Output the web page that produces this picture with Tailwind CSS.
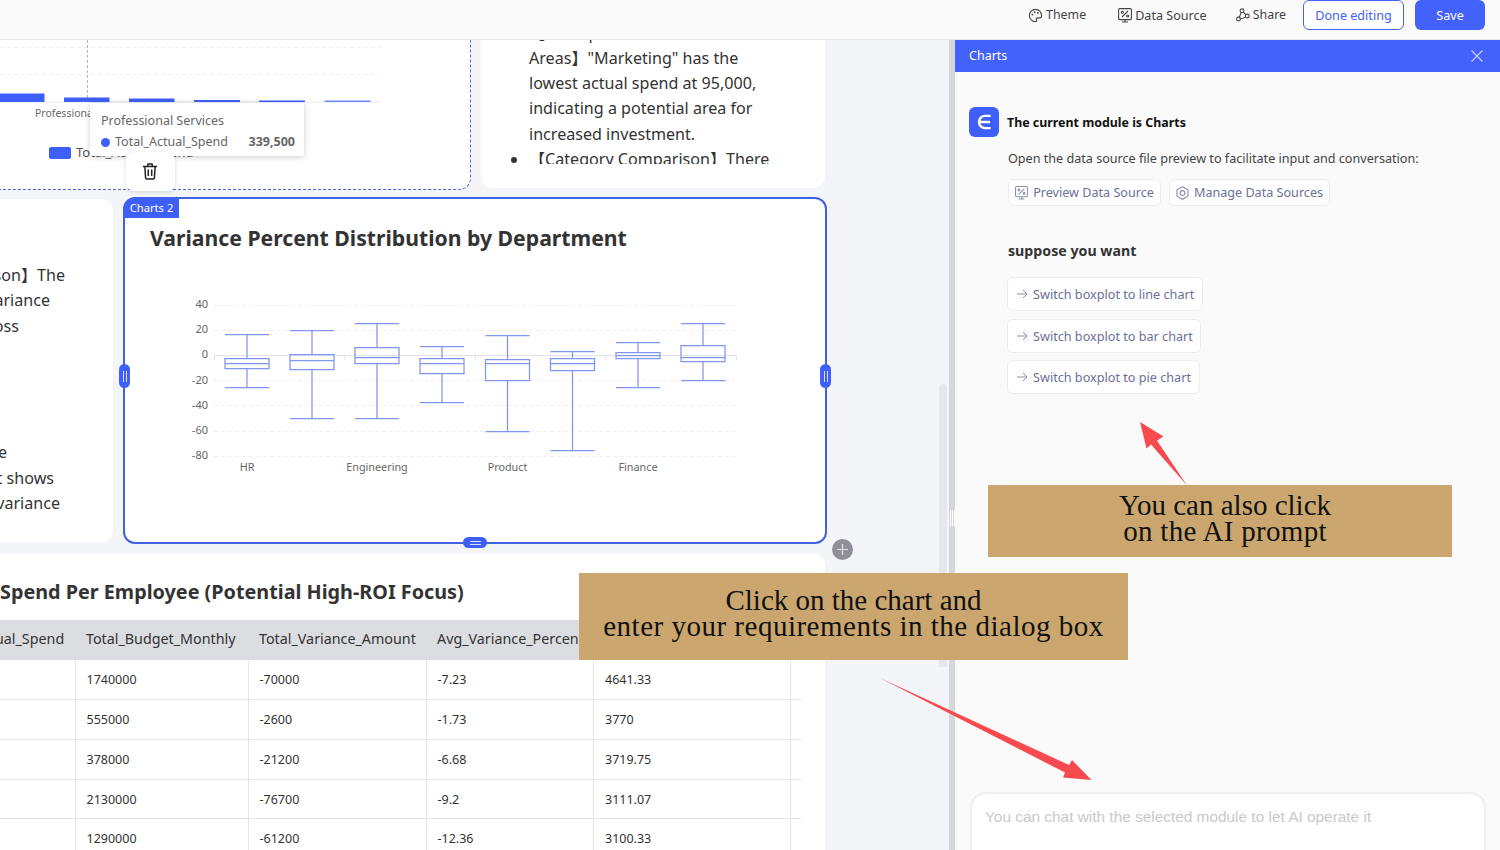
<!DOCTYPE html>
<html lang="en">
<head>
    <meta charset="UTF-8">
    <meta name="viewport" content="width=device-width, initial-scale=1.0">
    <title>Charts editor</title>
    <script src="https://cdn.jsdelivr.net/npm/@tailwindcss/browser@4"></script>
</head>
<body class="h-[850px] w-[1500px] overflow-hidden relative bg-[#f3f5f9] text-[#333] [font-family:'Noto_Sans','Noto_Sans_CJK_SC',sans-serif]">

    <!-- top bar -->
    <header class="h-10 bg-[#fafafa] border-b border-[#e8e8ea] flex justify-end items-start pr-[15px] text-[12.4px] text-[#444]">
        <div class="h-[30px] flex items-center gap-[3px] mr-[32px]">
            <svg class="w-[15px] h-[15px]" viewBox="0 0 16 16" fill="none" stroke="#444" stroke-width="1.2"><path d="M8 1.5a6.5 6.5 0 1 0 0 13c1.6 0 1.6-1.2 1.1-2-.6-1 0-2 1.1-2h2.2c1.2 0 2.1-.9 2.1-2.2C14.500 4.300 11.600 1.500 8 1.500z"/><circle cx="4.700" cy="7" r="1" fill="#444" stroke="none"/><circle cx="7" cy="4.500" r="1" fill="#444" stroke="none"/><circle cx="10.500" cy="5.200" r="1" fill="#444" stroke="none"/></svg>
            <span>Theme</span>
        </div>
        <div class="h-[30px] flex items-center gap-[3px] mr-[29px] pt-[2px] text-[12.6px]">
            <svg class="w-[14px] h-[15px] -mt-[2px]" viewBox="0 0 14 15" fill="none" stroke="#444" stroke-width="1.100"><rect x="0.600" y="0.600" width="12.800" height="11" rx="1.200"/><path d="M4 14h6M7 11.600V14M4 9l6-6"/><circle cx="4.300" cy="4.300" r="1"/><circle cx="9.700" cy="8" r="1"/></svg>
            <span>Data Source</span>
        </div>
        <div class="h-[30px] flex items-center gap-[3px] mr-[17px]">
            <svg class="w-[14px] h-[14px]" viewBox="0 0 14 14" fill="none" stroke="#444" stroke-width="1.100"><circle cx="6" cy="2.800" r="1.900"/><circle cx="2.500" cy="11" r="1.900"/><circle cx="11.300" cy="8" r="1.900"/><path d="M5.200 4.600 3.300 9.200M7.500 4.200l2.300 2.700M4.300 10.800c2 0 3.500-.6 5.200-2"/></svg>
            <span>Share</span>
        </div>
        <button class="h-[30px] w-[101px] pt-[2px] border border-[#4361fb] rounded-md bg-white text-[#4361fb] text-[12.6px] mr-[11px]">Done editing</button>
        <button class="h-[30px] w-[70px] pt-[2px] rounded-md bg-[#4361fb] text-white text-[12.6px]">Save</button>
    </header>

    <div class="flex h-[810px]">
        <!-- canvas -->
        <main class="w-[949px] flex flex-col shrink-0">
            <!-- row 1 -->
            <section class="flex gap-[10px] h-[150px] relative z-10">
                <div class="w-[471px] relative bg-white border-r border-b border-dashed border-[#4a63d8] rounded-br-xl">
                    <svg class="w-[470px] h-[149px]" viewBox="0 40 470 149">
                        <g stroke="#eeeeee" stroke-dasharray="4 3">
                            <path d="M0 47.500H380M0 74.500H380"/>
                        </g>
                        <path d="M87.500 40V102" stroke="#b5b5b5" stroke-dasharray="3 2"/>
                        <path d="M0 102H380" stroke="#e6e8ee"/>
                        <g fill="#3f5ffb">
                            <rect x="0" y="93.500" width="44.500" height="8.500"/>
                            <rect x="64" y="97.500" width="45.500" height="4.500"/>
                            <rect x="129" y="98.500" width="45.500" height="3.500"/>
                            <rect x="194" y="100" width="46" height="2"/>
                            <rect x="259" y="100.500" width="46" height="1.500"/>
                            <rect x="324.500" y="100.500" width="46" height="1.500" fill="#6f87fb"/>
                        </g>
                        <text x="35" y="117" font-size="10.5" fill="#666">Professional Services</text>
                        <rect x="49" y="147" width="22" height="12" rx="2" fill="#3f5ffb"/>
                        <text x="76" y="157" font-size="13" fill="#555">Total_Actual_Spend</text>
                    </svg>
                    <!-- hover tooltip -->
                    <div class="absolute left-[90px] top-[63px] w-[214px] h-[53px] bg-white shadow-[0_1px_6px_rgba(0,0,0,0.2)] pl-[11px] pr-[9px] pt-[9px] text-[12.5px] text-[#666]">
                        <div class="leading-[18px]">Professional Services</div>
                        <div class="flex items-center mt-[3px] leading-[18px]">
                            <span class="w-[9px] h-[9px] rounded-full bg-[#3f5ffb] mr-[5px]"></span>
                            <span>Total_Actual_Spend</span>
                            <span class="ml-auto font-bold">339,500</span>
                        </div>
                    </div>
                    <!-- delete -->
                    <button class="absolute left-[126px] top-[112px] w-[49px] h-[39px] bg-white rounded-lg shadow-[0_1px_4px_rgba(0,0,0,0.15)] flex items-center justify-center pr-[2px]">
                        <svg class="w-[16px] h-[17px]" viewBox="0 0 16 17" fill="none" stroke="#222" stroke-width="1.500"><path d="M1 3.500h14M5.500 3.500 6 1h4l.5 2.500M2.800 3.500l.8 11.300c0 .7.500 1.200 1.200 1.200h6.400c.7 0 1.200-.5 1.200-1.200l.8-11.300M6.300 6.500v6.500M9.700 6.500v6.500"/></svg>
                    </button>
                </div>
                <div class="w-[344px] h-[148px] bg-white rounded-b-xl">
                    <div class="h-[124px] overflow-hidden text-[16.1px] leading-[25.3px]">
                        <ul class="list-disc pl-[48px] -mt-[19.5px]">
                            <li>【Low Spend<br>Areas】"Marketing" has the<br>lowest actual spend at 95,000,<br>indicating a potential area for<br>increased investment.</li>
                            <li>【Category Comparison】There</li>
                        </ul>
                    </div>
                </div>
            </section>

            <!-- row 2 -->
            <section class="flex gap-[10px] h-[347px] mt-[7px]">
                <div class="w-[113px] h-[343px] mt-[2px] bg-white rounded-r-xl overflow-hidden pt-[64px] text-[16.1px] leading-[25.3px]">
                    <div class="-ml-[100px] text-right whitespace-nowrap">
                        <div class="w-[165px]">son】The</div>
                        <div class="w-[150px]">variance</div>
                        <div class="w-[119px]">across</div>
                        <div class="w-[107px] mt-[101.500px]">the</div>
                        <div class="w-[154px]">chart shows</div>
                        <div class="w-[160px]">variance</div>
                    </div>
                </div>
                <div class="w-[704px] relative bg-white border-2 border-[#4162e0] rounded-xl">
                    <span class="absolute -left-px -top-px w-[55px] h-[20px] bg-[#3f5ffb] text-white text-[11.2px] leading-[20px] text-center rounded-tl-xl">Charts 2</span>
                    <h2 class="pl-[25px] pt-[24px] text-[21.2px] leading-[30px] font-bold whitespace-nowrap">Variance Percent Distribution by Department</h2>
                    <svg class="w-[560px] h-[190px] ml-[60px] mt-[37px]" viewBox="185 290 560 190">
                        <g stroke="#eeeeee" stroke-dasharray="4 3">
                            <path d="M214 305.500H737M214 330.500H737M214 380.500H737M214 405.500H737M214 431.500H737M214 456.500H737"/>
                        </g>
                        <path d="M214 355.500H737M214.500 355V360M345 355V360M475.500 355V360M606 355V360M736.500 355V360" stroke="#e0e3ea"/>
                        <g font-size="11" fill="#666" text-anchor="end">
                            <text x="208" y="308">40</text>
                            <text x="208" y="333">20</text>
                            <text x="208" y="358">0</text>
                            <text x="208" y="384">-20</text>
                            <text x="208" y="409">-40</text>
                            <text x="208" y="434">-60</text>
                            <text x="208" y="459">-80</text>
                        </g>
                        <g font-size="10.8" fill="#666" text-anchor="middle">
                            <text x="247" y="471">HR</text>
                            <text x="377" y="471">Engineering</text>
                            <text x="507.500" y="471">Product</text>
                            <text x="638" y="471">Finance</text>
                        </g>
                        <g fill="none" stroke="#8196f0" stroke-width="1.250">
                            <path d="M225 334.500H269M247 334.500V358.500M225 358.500H269V368.500H225ZM225 363.500H269M247 368.500V387.500M225 387.500H269"/>
                            <path d="M290 330.500H334M312 330.500V354.500M290 354.500H334V369.500H290ZM290 360.500H334M312 369.500V418.500M290 418.500H334"/>
                            <path d="M355 323.500H399M377 323.500V347.500M355 347.500H399V363.500H355ZM355 357.500H399M377 363.500V418.500M355 418.500H399"/>
                            <path d="M420 346.500H464M442 346.500V358.500M420 358.500H464V373.500H420ZM420 363.500H464M442 373.500V402.500M420 402.500H464"/>
                            <path d="M485.500 335.500H529.500M507.500 335.500V359.500M485.500 359.500H529.500V380.500H485.500ZM485.500 363.500H529.500M507.500 380.500V431.500M485.500 431.500H529.500"/>
                            <path d="M550.500 351.500H594.500M572.500 351.500V358.500M550.500 358.500H594.500V370.500H550.500ZM550.500 363.500H594.500M572.500 370.500V450.500M550.500 450.500H594.500"/>
                            <path d="M616 342.500H660M638 342.500V352.500M616 352.500H660V358.500H616ZM616 355.500H660M638 358.500V387.500M616 387.500H660"/>
                            <path d="M681 323.500H725M703 323.500V345.500M681 345.500H725V361.500H681ZM681 357.500H725M703 361.500V380.500M681 380.500H725"/>
                        </g>
                    </svg>
                    <!-- resize handles -->
                    <span class="absolute -left-[6px] top-[165px] w-[11px] h-[24px] rounded-full bg-[#3f5ffb] flex items-center justify-center gap-[2px]"><i class="w-px h-[11px] bg-white/80"></i><i class="w-px h-[11px] bg-white/80"></i></span>
                    <span class="absolute -right-[6px] top-[165px] w-[11px] h-[24px] rounded-full bg-[#3f5ffb] flex items-center justify-center gap-[2px]"><i class="w-px h-[11px] bg-white/80"></i><i class="w-px h-[11px] bg-white/80"></i></span>
                    <span class="absolute left-[338px] -bottom-[6px] w-[24px] h-[11px] rounded-full bg-[#3f5ffb] flex flex-col items-center justify-center gap-[2px]"><i class="w-[11px] h-px bg-white/80"></i><i class="w-[11px] h-px bg-white/80"></i></span>
                    <span class="absolute -right-[28px] bottom-[-18px] w-[21px] h-[21px] rounded-full bg-[#8e9099] flex items-center justify-center">
                        <svg class="w-[11px] h-[11px]" viewBox="0 0 11 11" stroke="#e4e4e8" stroke-width="1.200"><path d="M5.500 0V11M0 5.500H11"/></svg>
                    </span>
                </div>
            </section>

            <!-- row 3 -->
            <section class="w-[825px] flex-1 mt-[10px] bg-white rounded-tr-xl overflow-hidden">
                <h2 class="pt-[24px] text-[19.8px] leading-[28px] font-bold whitespace-nowrap">Spend Per Employee (Potential High-ROI Focus)</h2>
                <div class="w-[801px] mt-[14px] overflow-hidden">
                    <table class="table-fixed -ml-[80px] w-[920.500px] text-[12.5px] border-collapse">
                        <colgroup>
                            <col class="w-[155px]"><col class="w-[173px]"><col class="w-[178px]"><col class="w-[167.500px]"><col class="w-[197px]"><col class="w-[50px]">
                        </colgroup>
                        <thead class="bg-[#dcdde1] text-[14.3px] text-left">
                            <tr class="h-[40px]">
                                <th class="font-normal pl-[15px] pb-[2px] whitespace-nowrap">Total_Actual_Spend</th>
                                <th class="font-normal pl-[11px] pb-[2px] whitespace-nowrap">Total_Budget_Monthly</th>
                                <th class="font-normal pl-[11px] pb-[2px] whitespace-nowrap">Total_Variance_Amount</th>
                                <th class="font-normal pl-[11px] pb-[2px] whitespace-nowrap">Avg_Variance_Percent</th>
                                <th class="font-normal pl-[11px] pb-[2px] whitespace-nowrap">Spend_Per_Employee</th>
                                <th></th>
                            </tr>
                        </thead>
                        <tbody class="[&_td]:pt-[2px]">
                            <tr class="h-[39.500px] border-b border-[#e6e6e9]">
                                <td></td><td class="border-l border-[#e6e6e9] pl-[11px]">1740000</td><td class="border-l border-[#e6e6e9] pl-[11px]">-70000</td><td class="border-l border-[#e6e6e9] pl-[11px]">-7.23</td><td class="border-l border-[#e6e6e9] pl-[11px]">4641.33</td><td class="border-l border-[#e6e6e9]"></td>
                            </tr>
                            <tr class="h-[40px] border-b border-[#e6e6e9]">
                                <td></td><td class="border-l border-[#e6e6e9] pl-[11px]">555000</td><td class="border-l border-[#e6e6e9] pl-[11px]">-2600</td><td class="border-l border-[#e6e6e9] pl-[11px]">-1.73</td><td class="border-l border-[#e6e6e9] pl-[11px]">3770</td><td class="border-l border-[#e6e6e9]"></td>
                            </tr>
                            <tr class="h-[40px] border-b border-[#e6e6e9]">
                                <td></td><td class="border-l border-[#e6e6e9] pl-[11px]">378000</td><td class="border-l border-[#e6e6e9] pl-[11px]">-21200</td><td class="border-l border-[#e6e6e9] pl-[11px]">-6.68</td><td class="border-l border-[#e6e6e9] pl-[11px]">3719.75</td><td class="border-l border-[#e6e6e9]"></td>
                            </tr>
                            <tr class="h-[39px] border-b border-[#e6e6e9]">
                                <td></td><td class="border-l border-[#e6e6e9] pl-[11px]">2130000</td><td class="border-l border-[#e6e6e9] pl-[11px]">-76700</td><td class="border-l border-[#e6e6e9] pl-[11px]">-9.2</td><td class="border-l border-[#e6e6e9] pl-[11px]">3111.07</td><td class="border-l border-[#e6e6e9]"></td>
                            </tr>
                            <tr class="h-[40px]">
                                <td></td><td class="border-l border-[#e6e6e9] pl-[11px]">1290000</td><td class="border-l border-[#e6e6e9] pl-[11px]">-61200</td><td class="border-l border-[#e6e6e9] pl-[11px]">-12.36</td><td class="border-l border-[#e6e6e9] pl-[11px]">3100.33</td><td class="border-l border-[#e6e6e9]"></td>
                            </tr>
                        </tbody>
                    </table>
                </div>
            </section>
        </main>

        <!-- divider -->
        <div class="w-[6px] shrink-0 bg-[#d5d7db] flex flex-col">
            <div class="h-[470px]"></div>
            <div class="h-[16px] flex justify-center gap-px"><i class="w-px bg-white"></i><i class="w-px bg-white"></i><i class="w-px bg-white"></i></div>
        </div>

        <!-- charts panel -->
        <aside class="flex-1 bg-[#fafafa] flex flex-col">
            <div class="h-8 bg-[#4361fb] flex items-center justify-between pl-[14px] pr-[17px] text-white text-[12.5px]">
                <span>Charts</span>
                <svg class="w-[12px] h-[12px]" viewBox="0 0 12 12" stroke="#c9d2fd" stroke-width="1.100"><path d="M0.500 0.500 11.500 11.500M11.500 0.500 0.500 11.500"/></svg>
            </div>
            <div class="pl-[14px] pt-[35px] flex items-center h-[65px]">
                <span class="w-[30px] h-[30px] rounded-md bg-[#3f5ffb] flex items-center justify-center">
                    <svg class="w-[20px] h-[20px]" viewBox="0 0 18 18" fill="none" stroke="#fff" stroke-width="2.200"><path d="M15 3.500H10a5.500 5.500 0 0 0 0 11h5M5 9h9.500"/></svg>
                </span>
                <span class="ml-[8px] pt-[2px] text-[12.4px] font-bold text-[#111]">The current module is Charts</span>
            </div>
            <div class="pl-[53px]">
                <p class="mt-[13px] text-[12.6px] leading-[18px] text-[#444] whitespace-nowrap">Open the data source file preview to facilitate input and conversation:</p>
                <div class="flex gap-[8px] mt-[11px]">
                    <button class="h-[27px] w-[153px] pt-px bg-white border border-[#ececf0] rounded-md flex items-center justify-center gap-[5px] text-[12.6px] text-[#6b7097]">
                        <svg class="w-[13px] h-[14px]" viewBox="0 0 14 15" fill="none" stroke="#8a8ea8" stroke-width="1.100"><rect x="0.600" y="0.600" width="12.800" height="11" rx="1.200"/><path d="M4 14h6M7 11.600V14M4 9l6-6"/><circle cx="4.300" cy="4.300" r="1"/><circle cx="9.700" cy="8" r="1"/></svg>
                        Preview Data Source
                    </button>
                    <button class="h-[27px] w-[161px] pt-px bg-white border border-[#ececf0] rounded-md flex items-center justify-center gap-[5px] text-[12.6px] text-[#6b7097]">
                        <svg class="w-[13px] h-[14px]" viewBox="0 0 13 14" fill="none" stroke="#8a8ea8" stroke-width="1.100"><path d="M6.500 .7 12 3.800v6.400L6.500 13.300 1 10.200V3.800z"/><circle cx="6.500" cy="7" r="2.400"/></svg>
                        Manage Data Sources
                    </button>
                </div>
                <h3 class="mt-[35px] text-[14.2px] leading-[20px] font-bold text-[#333]">suppose you want</h3>
                <div class="flex flex-col items-start gap-[7.500px] mt-[16px] -ml-px text-[12.65px] text-[#6b7097]">
                    <button class="h-[34px] w-[196px] bg-white border border-[#ececf0] rounded-md flex items-center pl-[9px] gap-[5px] pt-px">
                        <svg class="w-[11px] h-[10px] -mt-px" viewBox="0 0 11 10" fill="none" stroke="#8a8ea8" stroke-width="1"><path d="M0 5H10M6 1l4 4-4 4"/></svg>
                        Switch boxplot to line chart
                    </button>
                    <button class="h-[34px] w-[194px] bg-white border border-[#ececf0] rounded-md flex items-center pl-[9px] gap-[5px] pt-px">
                        <svg class="w-[11px] h-[10px] -mt-px" viewBox="0 0 11 10" fill="none" stroke="#8a8ea8" stroke-width="1"><path d="M0 5H10M6 1l4 4-4 4"/></svg>
                        Switch boxplot to bar chart
                    </button>
                    <button class="h-[34px] w-[193px] bg-white border border-[#ececf0] rounded-md flex items-center pl-[9px] gap-[5px] pt-px">
                        <svg class="w-[11px] h-[10px] -mt-px" viewBox="0 0 11 10" fill="none" stroke="#8a8ea8" stroke-width="1"><path d="M0 5H10M6 1l4 4-4 4"/></svg>
                        Switch boxplot to pie chart
                    </button>
                </div>
            </div>
            <div class="mt-auto ml-[15px] mr-[14px] h-[58px] bg-white border-2 border-b-0 border-[#eeeef0] rounded-t-2xl pl-[13px] pt-[13px] text-[15.4px] leading-[20px] text-[#c9c9c9] whitespace-nowrap [font-family:'Liberation_Sans',sans-serif]">You can chat with the selected module to let AI operate it</div>
        </aside>
    </div>

    <!-- canvas scrollbar -->
    <div class="absolute left-[939px] top-[384px] w-[8px] h-[283px] rounded-t bg-[#e6e7ea]"></div>

    <!-- tutorial annotations laid over the screenshot -->
    <div class="absolute left-[988px] top-[485px] w-[464px] h-[72px] z-20 bg-[#cba76f] flex flex-col items-center justify-center pl-[10px] pb-[6px] text-[29px] leading-[26px] text-[#111] [font-family:'Liberation_Serif',serif]">
        <span>You can also click</span>
        <span class="tracking-[0.3px]">on the AI prompt</span>
    </div>
    <div class="absolute left-[579px] top-[573px] w-[549px] h-[87px] z-20 bg-[#cba76f] flex flex-col items-center justify-center pb-[7px] text-[29px] leading-[26px] text-[#111] whitespace-nowrap [font-family:'Liberation_Serif',serif]">
        <span>Click on the chart and</span>
        <span class="tracking-[0.5px]">enter your requirements in the dialog box</span>
    </div>
    <svg class="absolute left-0 top-0 w-[1500px] h-[850px] z-30 pointer-events-none" viewBox="0 0 1500 850" fill="#f74b50">
        <path d="M1140 422 1163.500 436.500 1157 440.500 1187 485.500 1151 444.500 1146.500 448.500Z"/>
        <path d="M880 678 1069 765 1072 760 1091.500 780 1063 777.500 1065 772.500Z"/>
    </svg>
</body>
</html>
